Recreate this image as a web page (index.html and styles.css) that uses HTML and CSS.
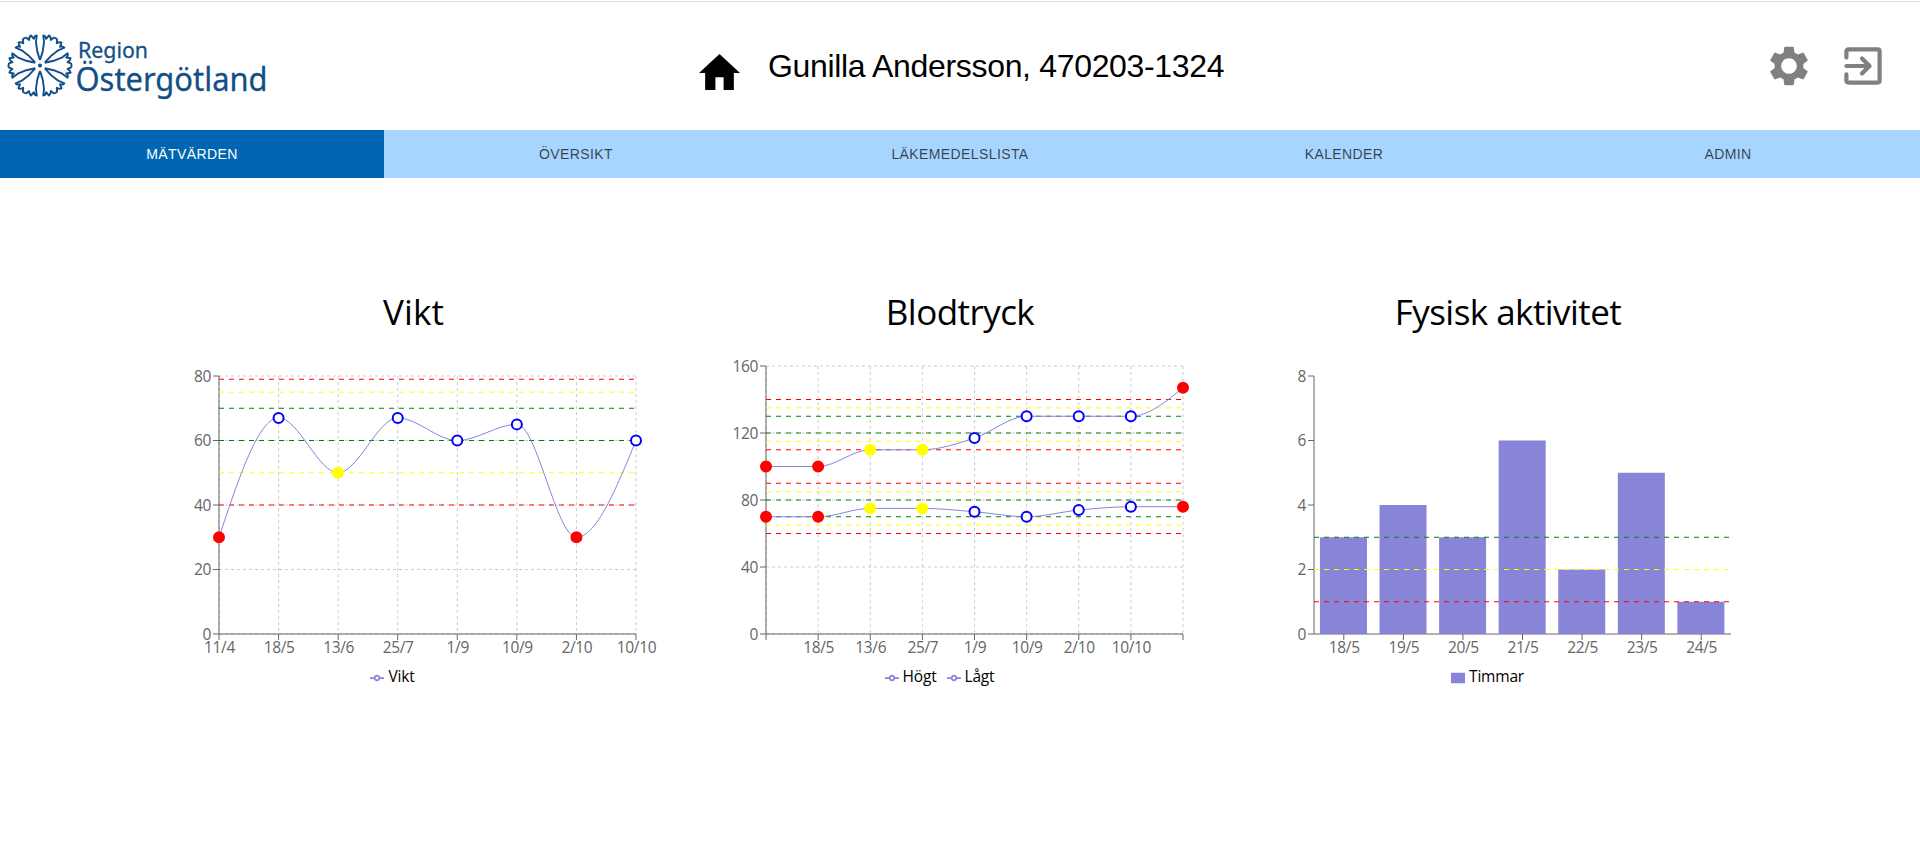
FILE: index.html
```html
<!DOCTYPE html>
<html lang="sv">
<head>
<meta charset="utf-8">
<title>Region Östergötland – Mätvärden</title>
<link rel="stylesheet" href="styles.css">
</head>
<body>
<header class="header">
  <svg class="logo" width="270" height="80" viewBox="0 0 270 80" role="img" aria-label="Region Östergötland">
    <defs>
      <path id="petal" d="M4.800 -2.700L13.600 -4.700L22.300 -8.200L27.600 -12.200Q28.600 -9.800 26.200 -8L30.600 -7.200Q30.400 -5 27.600 -3.400L31.200 -1.800Q31.800 0 31.200 1.800L27.600 3.400Q30.400 5 30.600 7.200L26.200 8Q28.600 9.800 27.600 12.200L22.300 8.200L13.600 4.700L4.800 2.700"/>
    </defs>
    <g class="flower" transform="translate(40 40.5)">
      <use href="#petal"/>
      <use href="#petal" transform="rotate(60)"/>
      <use href="#petal" transform="rotate(120)"/>
      <use href="#petal" transform="rotate(180)"/>
      <use href="#petal" transform="rotate(240)"/>
      <use href="#petal" transform="rotate(300)"/>
      <circle class="flower-core" r="2"/>
    </g>
    <text class="logo-region" x="78" y="33" textLength="70" lengthAdjust="spacingAndGlyphs">Region</text>
    <text class="logo-name" x="75.500" y="65.500" textLength="192" lengthAdjust="spacingAndGlyphs">Östergötland</text>
  </svg>
  <div class="patient">
    <svg class="home" width="41" height="36" viewBox="2 3 20 17" preserveAspectRatio="none"><path d="M10 20v-6h4v6h5v-8h3L12 3 2 12h3v8z"/></svg>
    <span class="patient-name">Gunilla Andersson, 470203-1324</span>
  </div>
  <div class="actions">
    <svg width="48" height="48" viewBox="0 0 24 24"><path fill="#808080" d="M19.140 12.940c.04-.3.06-.61.06-.94 0-.32-.02-.64-.07-.94l2.030-1.580c.18-.14.23-.41.12-.61l-1.920-3.320c-.12-.22-.37-.29-.59-.22l-2.390.96c-.5-.38-1.030-.7-1.620-.94l-.36-2.540c-.04-.24-.24-.41-.48-.41h-3.840c-.24 0-.43.17-.47.41l-.36 2.540c-.59.24-1.130.57-1.620.94l-2.390-.96c-.22-.08-.47 0-.59.22L2.740 8.870c-.12.21-.08.47.12.61l2.030 1.580c-.05.3-.09.63-.09.94s.02.64.07.94l-2.030 1.580c-.18.14-.23.41-.12.61l1.920 3.320c.12.22.37.29.59.22l2.390-.96c.5.38 1.030.7 1.620.94l.36 2.540c.05.24.24.41.48.41h3.840c.24 0 .44-.17.47-.41l.36-2.540c.59-.24 1.130-.56 1.620-.94l2.390.96c.22.08.47 0 .59-.22l1.920-3.320c.12-.22.07-.47-.12-.61l-2.010-1.580zM12 15.900c-2.140 0-3.900-1.760-3.900-3.900s1.760-3.900 3.900-3.900 3.900 1.760 3.900 3.900-1.760 3.900-3.900 3.900z"/></svg>
    <svg class="exit" width="38" height="38" viewBox="0 0 38 38"><path d="M2.400 10.600V4.400Q2.400 2.400 4.400 2.400H33.600Q35.600 2.400 35.600 4.400V33.600Q35.600 35.600 33.600 35.600H4.400Q2.400 35.600 2.400 33.600V27.400M2.400 19H25.500M18 11.500L25.500 19L18 26.500"/></svg>
  </div>
</header>
<nav class="tabs">
  <a class="tab tab-active">MÄTVÄRDEN</a>
  <a class="tab">ÖVERSIKT</a>
  <a class="tab">LÄKEMEDELSLISTA</a>
  <a class="tab">KALENDER</a>
  <a class="tab">ADMIN</a>
</nav>
<main class="charts">
  <section class="card">
    <h2 class="title title-vikt">Vikt</h2>
    <svg class="chart" id="vikt" width="547" height="314"></svg>
    <div class="legend">
      <span class="key"><svg class="mark" width="14" height="14" viewBox="0 0 32 32"><path d="M0 16h10.670A5.330 5.330 0 1 1 21.330 16H32M21.330 16A5.330 5.330 0 1 1 10.670 16"/></svg>Vikt</span>
    </div>
  </section>
  <section class="card">
    <h2 class="title">Blodtryck</h2>
    <svg class="chart" id="blodtryck" width="547" height="314"></svg>
    <div class="legend">
      <span class="key"><svg class="mark" width="14" height="14" viewBox="0 0 32 32"><path d="M0 16h10.670A5.330 5.330 0 1 1 21.330 16H32M21.330 16A5.330 5.330 0 1 1 10.670 16"/></svg>Högt</span>
      <span class="key"><svg class="mark" width="14" height="14" viewBox="0 0 32 32"><path d="M0 16h10.670A5.330 5.330 0 1 1 21.330 16H32M21.330 16A5.330 5.330 0 1 1 10.670 16"/></svg>Lågt</span>
    </div>
  </section>
  <section class="card">
    <h2 class="title">Fysisk aktivitet</h2>
    <svg class="chart" id="aktivitet" width="547" height="314"></svg>
    <div class="legend">
      <span class="key"><svg class="mark" width="14" height="14" viewBox="0 0 32 32"><path class="swatch" d="M0 4h32v24H0z"/></svg>Timmar</span>
    </div>
  </section>
</main>
<script src="charts.js"></script>
</body>
</html>
```
FILE: styles.css
```css
* { box-sizing: border-box; }
body {
  margin: 0;
  background: #fff;
  color: #000;
  font-family: "Open Sans", "Noto Sans", sans-serif;
  overflow: hidden;
}
.header {
  height: 130px;
  padding: 24px 38px 0 0;
  border-top: 1px solid transparent;
  box-shadow: inset 0 1px 0 #dadcdd;
  display: grid;
  grid-template-columns: 699px 1fr auto;
  align-items: start;
}
.logo { display: block; }
.flower { fill: none; stroke: #134f87; stroke-width: 1.9; stroke-linejoin: round; }
.flower-core { fill: #134f87; stroke: none; }
.logo-region, .logo-name { fill: #134f87; stroke: #134f87; stroke-width: 0.3; font-family: "Noto Sans", sans-serif; }
.logo-region { font-size: 22px; }
.logo-name { font-size: 33px; }
.patient {
  display: flex;
  align-items: flex-start;
  gap: 28px;
  padding-top: 21px;
}
.home { margin-top: 8px; flex: none; }
.patient-name {
  font: 32px/40px "Liberation Sans", Arial, sans-serif;
  letter-spacing: -0.33px;
  white-space: nowrap;
}
.actions {
  display: flex;
  align-items: center;
  gap: 31px;
  padding-top: 17px;
}
.exit { fill: none; stroke: #808080; stroke-width: 4.2; stroke-linecap: round; stroke-linejoin: round; }
.tabs {
  display: grid;
  grid-template-columns: repeat(5, 1fr);
  height: 48px;
  background: #a8d5ff;
}
.tab {
  display: flex;
  align-items: center;
  justify-content: center;
  font: 14px/24px "Liberation Sans", Arial, sans-serif;
  letter-spacing: 0.4px;
  color: rgba(0, 0, 0, 0.7);
}
.tab-active { background: #0066b3; color: #fff; }
.charts {
  display: grid;
  grid-template-columns: 547px 548px 548px;
  padding: 110px 0 0 139px;
}
.title {
  margin: 0;
  height: 58px;
  font-size: 35px;
  line-height: 48px;
  font-weight: 400;
  letter-spacing: -0.55px;
  text-align: center;
}
.title-vikt { letter-spacing: 0.1px; padding-left: 2px; }
.chart { display: block; }
.grid line { stroke: #ccc; stroke-dasharray: 3 3; }
.limit { stroke-dasharray: 5 5; }
.axis line { stroke: #666; }
.axis text { fill: #666; font-size: 15.5px; letter-spacing: -0.35px; }
.curve { fill: none; stroke: #8884d8; stroke-width: 1; }
.dot { stroke-width: 2; }
.bar { fill: #8884d8; }
.legend {
  width: 477px;
  margin-left: 20px;
  padding-top: 4px;
  display: flex;
  justify-content: center;
  font-size: 15.5px;
  letter-spacing: -0.2px;
  line-height: 24px;
}
.key { display: flex; align-items: center; gap: 4px; margin-right: 10px; }
.mark { fill: none; stroke: #8884d8; stroke-width: 4; margin-top: 3px; }
.swatch { fill: #8884d8; stroke: none; }
```
FILE: charts.js
```js
const NS = 'http://www.w3.org/2000/svg';
const LEFT = 80, RIGHT = 497, BOTTOM = 288;

function add(parent, name, attrs, text) {
  const el = document.createElementNS(NS, name);
  for (const key in attrs) el.setAttribute(key, attrs[key]);
  if (text !== undefined) el.textContent = text;
  parent.appendChild(el);
  return el;
}

// Cubic path whose tangents keep the curve monotone between points.
function monotonePath(points) {
  const n = points.length;
  const slope = [];
  for (let i = 0; i < n - 1; i++) {
    slope.push((points[i + 1][1] - points[i][1]) / (points[i + 1][0] - points[i][0]));
  }
  const t = new Array(n).fill(0);
  for (let i = 1; i < n - 1; i++) {
    const a = slope[i - 1], b = slope[i];
    t[i] = (Math.sign(a) + Math.sign(b)) * Math.min(Math.abs(a), Math.abs(b), Math.abs(a + b) / 4) || 0;
  }
  t[0] = (3 * slope[0] - t[1]) / 2;
  t[n - 1] = (3 * slope[n - 2] - t[n - 2]) / 2;
  let d = `M${points[0]}`;
  for (let i = 0; i < n - 1; i++) {
    const [x0, y0] = points[i], [x1, y1] = points[i + 1], h = (x1 - x0) / 3;
    d += `C${x0 + h},${y0 + h * t[i]},${x1 - h},${y1 - h * t[i + 1]},${x1},${y1}`;
  }
  return d;
}

function drawChart(id, o) {
  const svg = document.getElementById(id);
  const y = v => BOTTOM - (v / o.max) * (BOTTOM - o.top);
  const n = o.labels.length;
  const band = (RIGHT - LEFT) / (o.bars ? n : n - 1);
  const x = i => LEFT + band * (o.bars ? i + 0.5 : i);
  const ticks = [0, 1, 2, 3, 4].map(k => k * o.max / 4);

  if (!o.bars) {
    const grid = add(svg, 'g', { class: 'grid' });
    ticks.forEach(v => add(grid, 'line', { x1: LEFT, x2: RIGHT, y1: y(v), y2: y(v) }));
    o.labels.forEach((_, i) => add(grid, 'line', { x1: x(i), x2: x(i), y1: o.top, y2: BOTTOM }));
  }
  const axis = add(svg, 'g', { class: 'axis' });
  add(axis, 'line', { x1: LEFT, x2: RIGHT, y1: BOTTOM, y2: BOTTOM });
  add(axis, 'line', { x1: LEFT, x2: LEFT, y1: o.top, y2: BOTTOM });
  ticks.forEach(v => {
    add(axis, 'line', { x1: LEFT - 6, x2: LEFT, y1: y(v), y2: y(v) });
    add(axis, 'text', { x: LEFT - 8, y: y(v) + 5.5, 'text-anchor': 'end' }, v);
  });
  o.labels.forEach((text, i) => {
    add(axis, 'line', { x1: x(i), x2: x(i), y1: BOTTOM, y2: BOTTOM + 6 });
    if (text) add(axis, 'text', { x: x(i) + 0.5, y: BOTTOM + 19, 'text-anchor': 'middle' }, text);
  });
  if (o.bars) {
    o.bars.forEach((v, i) => add(svg, 'rect', {
      class: 'bar', x: LEFT + band * i + band * 0.1, y: y(v), width: 47, height: BOTTOM - y(v)
    }));
  }
  o.limits.forEach(([v, color]) => add(svg, 'line', {
    class: 'limit', stroke: color, x1: LEFT, x2: RIGHT, y1: y(v), y2: y(v)
  }));
  (o.series || []).forEach(s => {
    const points = s.values.map((v, i) => [x(i), y(v)]);
    add(svg, 'path', { class: 'curve', d: monotonePath(points) });
    points.forEach(([cx, cy], i) => {
      const c = { r: 'red', y: 'yellow', b: 'blue' }[s.status[i]];
      add(svg, 'circle', { class: 'dot', cx, cy, r: 5, stroke: c, fill: c === 'blue' ? 'white' : c });
    });
  });
}

drawChart('vikt', {
  max: 80, top: 30,
  labels: ['11/4', '18/5', '13/6', '25/7', '1/9', '10/9', '2/10', '10/10'],
  limits: [[79, 'red'], [75, 'yellow'], [70, 'green'], [60, 'green'], [50, 'yellow'], [40, 'red']],
  series: [{ values: [30, 67, 50, 67, 60, 65, 30, 60], status: 'rbybbbrb' }]
});
drawChart('blodtryck', {
  max: 160, top: 20,
  labels: ['', '18/5', '13/6', '25/7', '1/9', '10/9', '2/10', '10/10', ''],
  limits: [[140, 'red'], [135, 'yellow'], [130, 'green'], [120, 'green'], [115, 'yellow'], [110, 'red'],
    [90, 'red'], [85, 'yellow'], [80, 'green'], [70, 'green'], [65, 'yellow'], [60, 'red']],
  series: [
    { values: [100, 100, 110, 110, 117, 130, 130, 130, 147], status: 'rryybbbbr' },
    { values: [70, 70, 75, 75, 73, 70, 74, 76, 76], status: 'rryybbbbr' }
  ]
});
drawChart('aktivitet', {
  max: 8, top: 30,
  labels: ['18/5', '19/5', '20/5', '21/5', '22/5', '23/5', '24/5'],
  bars: [3, 4, 3, 6, 2, 5, 1],
  limits: [[3, 'green'], [2, 'yellow'], [1, 'red']]
});
```
